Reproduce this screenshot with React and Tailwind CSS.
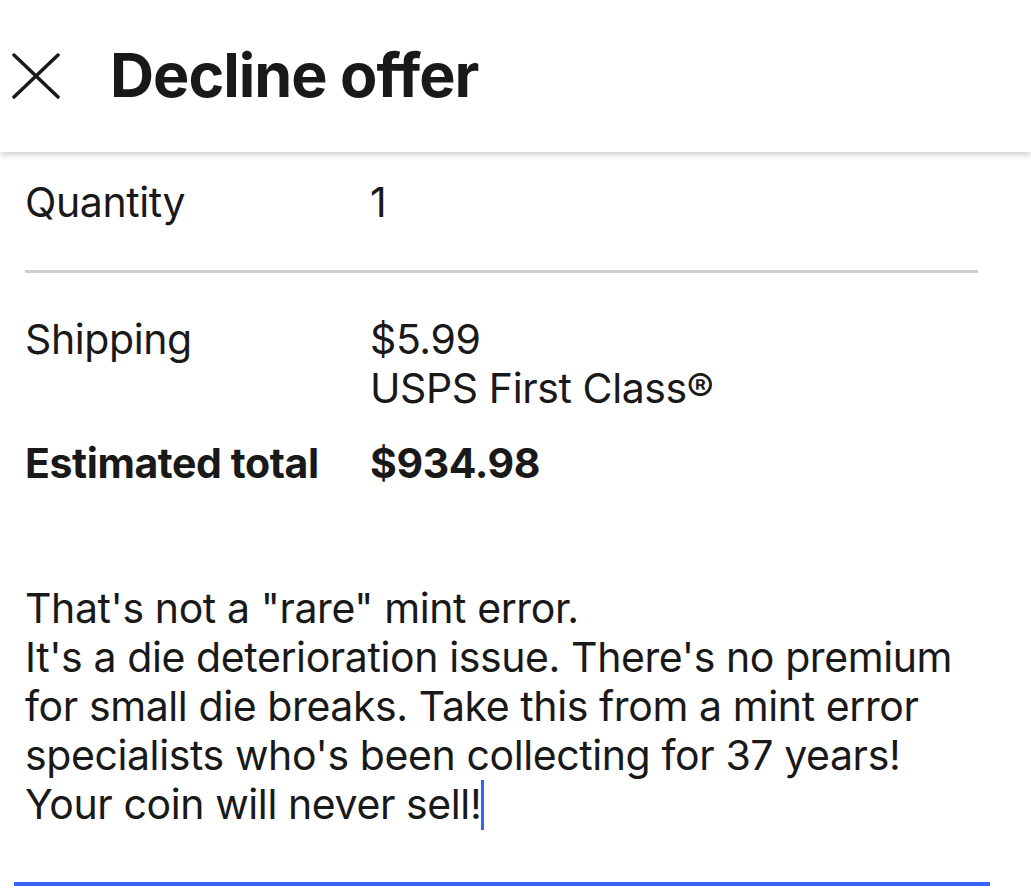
import React from 'react';

const FONT = { fontFamily: 'Inter, "Noto Sans", sans-serif' };

const Row = ({ label, children, bold }) => (
  <div className={`flex ${bold ? 'font-bold' : ''}`}>
    <div className="w-[345px] shrink-0">{label}</div>
    <div>{children}</div>
  </div>
);

export default function App() {
  return (
    <div className="w-[1031px] h-[895px] bg-white text-[#191919] overflow-hidden" style={FONT}>
      {/* Header */}
      <div className="relative z-10 h-[152px] bg-white flex items-center shadow-[0_3px_6px_rgba(0,0,0,0.18)]">
        <button className="ml-[12px] w-[48px] h-[48px] flex items-center justify-center">
          <svg width="48" height="48" viewBox="0 0 48 48" fill="none" stroke="#191919" strokeWidth="3.5" strokeLinecap="round">
            <path d="M2 3 L46 45 M46 3 L2 45" />
          </svg>
        </button>
        <h1 className="ml-[50px] text-[61px] font-bold tracking-[-1px] leading-none -mt-[2px]">Decline offer</h1>
      </div>

      {/* Details */}
      <div className="pl-[25px] pr-[53px] text-[41px] tracking-[-0.4px] leading-[49px]">
        <div className="pt-[26px]">
          <Row label="Quantity">1</Row>
        </div>
        <div className="mt-[43px] h-[3px] bg-[#cccccc]" />
        <div className="mt-[42px]">
          <Row label="Shipping">
            <div>$5.99</div>
            <div>USPS First Class®</div>
          </Row>
        </div>
        <div className="mt-[26px]">
          <Row label="Estimated total" bold>$934.98</Row>
        </div>

        <div className="mt-[96px] pr-[10px]">
          That's not a "rare" mint error.
          <br />
          It's a die deterioration issue. There's no premium for small die breaks. Take this from a mint error specialists who's been collecting for 37 years!
          <br />
          Your coin will never sell!<span className="inline-block align-middle w-[3px] h-[50px] bg-[#3665f3] -mt-[6px]" />
        </div>
      </div>
      <div className="mt-[52px] ml-[14px] w-[976px] h-[4px] bg-[#3665f3]" />
    </div>
  );
}
